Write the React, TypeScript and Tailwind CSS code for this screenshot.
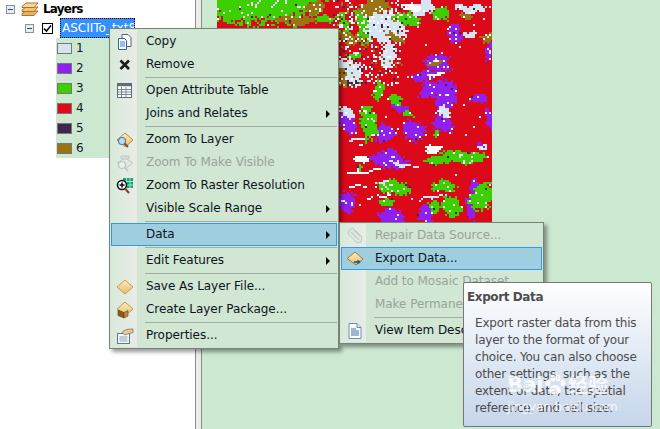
import type { ReactNode } from "react";

// raster colours, same as the legend
const LIGHT = "#d5e5f3";
const PURPLE = "#9020f0";
const GREEN = "#3cd000";
const RED = "#dc0a18";
const DARK = "#40264f";
const BROWN = "#9a7412";
const WHITE = "#ffffff";

const legend = [
  { n: "1", color: "#d5e5f0" },
  { n: "2", color: PURPLE },
  { n: "3", color: GREEN },
  { n: "4", color: "#e00a18" },
  { n: "5", color: DARK },
  { n: "6", color: BROWN },
];

// blobs measured on a 3x crop starting at x=215: cx, cy, rx, ry, colour
type Blob = [number, number, number, number, string];
const blobs: Blob[] = [
  // top left green and the arc round it
  [120, -20, 210, 90, GREEN], [250, 55, 70, 12, BROWN], [300, 20, 30, 20, BROWN],
  [330, 60, 30, 12, GREEN], [430, 70, 60, 50, GREEN], [400, 110, 30, 18, BROWN],
  [480, 20, 45, 24, BROWN], [505, 85, 60, 50, LIGHT], [530, 115, 30, 12, BROWN], [410, 60, 14, 45, RED],
  [375, 30, 18, 8, RED], [580, 50, 40, 22, GREEN], [620, 20, 36, 22, LIGHT], [680, 45, 26, 22, GREEN],
  [405, 210, 35, 40, LIGHT], [400, 240, 22, 8, DARK], [420, 160, 24, 8, GREEN], [470, 155, 30, 28, RED],
  [520, 170, 24, 34, LIGHT], [380, 230, 10, 30, BROWN], [590, 15, 30, 10, WHITE],
  [770, 20, 50, 12, LIGHT], [760, 40, 20, 10, BROWN], [810, 110, 24, 14, BROWN], [760, 95, 20, 10, LIGHT],
  // purple patches
  [712, 100, 20, 30, PURPLE], [820, 155, 10, 28, PURPLE], [670, 190, 38, 28, PURPLE], [665, 188, 22, 10, BROWN],
  [640, 265, 35, 24, PURPLE], [690, 290, 32, 50, PURPLE], [680, 370, 30, 30, PURPLE], [790, 290, 30, 12, PURPLE],
  [822, 360, 10, 40, PURPLE], [625, 222, 40, 14, PURPLE], [560, 320, 28, 11, PURPLE], [590, 385, 36, 30, PURPLE],
  [500, 400, 30, 28, PURPLE], [525, 480, 52, 28, PURPLE], [395, 365, 24, 30, PURPLE], [395, 600, 26, 30, PURPLE],
  [530, 650, 36, 25, PURPLE], [630, 640, 22, 26, PURPLE], [770, 590, 14, 60, PURPLE], [795, 432, 14, 10, PURPLE],
  // white and pale patches
  [690, 340, 16, 20, LIGHT], [660, 225, 30, 5, WHITE], [400, 330, 20, 16, LIGHT], [420, 410, 30, 4, LIGHT],
  [650, 445, 26, 14, WHITE], [800, 440, 16, 6, LIGHT], [510, 550, 40, 7, LIGHT], [420, 550, 30, 3, WHITE],
  [440, 470, 22, 10, WHITE], [560, 490, 50, 5, LIGHT], [650, 590, 40, 4, LIGHT], [490, 590, 40, 3, WHITE], [440, 510, 60, 3, WHITE],
  // green patches
  [458, 365, 24, 52, GREEN], [485, 272, 15, 30, GREEN], [540, 300, 22, 18, GREEN], [580, 335, 18, 8, GREEN],
  [750, 465, 72, 18, GREEN], [670, 482, 38, 12, GREEN], [530, 562, 50, 20, GREEN], [680, 560, 42, 16, GREEN],
  [800, 585, 34, 42, GREEN], [712, 620, 30, 30, GREEN], [520, 610, 26, 12, GREEN], [432, 497, 10, 10, GREEN],
  [655, 400, 8, 10, GREEN], [660, 620, 16, 22, GREEN],
];

function rasterPaths() {
  let seed = 41;
  const rnd = () => {
    seed = (seed * 16807) % 2147483647;
    return seed / 2147483647;
  };
  const cell = 2;
  const paths: Record<string, string> = {};
  for (let y = 0; y < 290; y += cell) {
    let runColor = "";
    let runX = 0;
    for (let x = 0; x <= 276; x += cell) {
      // back to crop coordinates, warped a little so that the patches don't come out as ovals
      const zx = (x + 2) * 3 + 6 * Math.sin(y * 0.13) + 3 * Math.sin(y * 0.41 + 1);
      const zy = y * 3 + 6 * Math.sin(x * 0.11 + 2) + 3 * Math.sin(x * 0.37);
      let c = RED;
      for (const [cx, cy, rx, ry, color] of blobs) {
        const d = ((zx - cx) / rx) ** 2 + ((zy - cy) / ry) ** 2;
        if (d + (rnd() - 0.5) * 0.9 < 1) c = color;
      }
      // speckle: heavier in the mixed patch at the top
      const r = rnd();
      const busy = y < 85 && x > 115 && x < 185;
      if (busy) {
        if (r < 0.16) c = rnd() < 0.6 ? WHITE : LIGHT;
        else if (r < 0.2) c = DARK;
        else if (r < 0.24) c = BROWN;
      } else if (c !== RED) {
        if (r < 0.08) c = rnd() < 0.6 ? WHITE : LIGHT;
        else if (r < 0.09) c = DARK;
      } else if (r < 0.005) c = rnd() < 0.6 ? WHITE : LIGHT;
      if (x === 276 || c !== runColor) {
        if (runColor) paths[runColor] = (paths[runColor] ?? "") + `M${runX} ${y}h${x - runX}v${cell}h${runX - x}z`;
        runColor = c;
        runX = x;
      }
    }
  }
  return paths;
}
const raster = rasterPaths();

function Icon({ children }: { children: ReactNode }) {
  return (
    <svg width="20" height="20" viewBox="0 0 20 20" className="shrink-0">
      {children}
    </svg>
  );
}

const diamond = "M10 3L18 10L12 15.5L10 16.5L2 10Z";
const Defs = () => (
  <svg width="0" height="0" className="absolute">
    <defs>
      <linearGradient id="gold" x1="0" y1="0" x2="0" y2="1">
        <stop offset="0" stopColor="#fdeec2" />
        <stop offset="1" stopColor="#edb85f" />
      </linearGradient>
    </defs>
  </svg>
);

const icons: Record<string, ReactNode> = {
  copy: (
    <Icon>
      <path d="M7 2.5h6l3 3v9h-9z" fill="#fff" stroke="#55616e" />
      <path d="M3.5 6.5h6l2 2v9h-8z" fill="#fff" stroke="#33639c" />
      <path d="M5 10h5M5 12h5M5 14h5" stroke="#2a7fd0" />
    </Icon>
  ),
  remove: (
    <Icon>
      <path d="M5.5 5.5L14 14M14 5.5L5.5 14" stroke="#1c1c1c" strokeWidth="2.6" />
    </Icon>
  ),
  table: (
    <Icon>
      <rect x="2.5" y="2.5" width="14" height="14" fill="#fff" stroke="#5f6b78" />
      <path d="M2.5 4h14" stroke="#5f6b78" strokeWidth="2.5" />
      <path d="M3 8.5h13M3 11h13M3 13.5h13M6.5 6v10M11 6v10" stroke="#7b8794" />
    </Icon>
  ),
  zoomLayer: (
    <Icon>
      <path d={diamond} fill="url(#gold)" stroke="#b98a3c" />
      <circle cx="7" cy="11" r="3.5" fill="#bcdcf5" stroke="#5d7f9f" strokeWidth="1.2" />
      <path d="M9.5 13.5L13 17" stroke="#8b4a2a" strokeWidth="2" />
    </Icon>
  ),
  zoomVisible: (
    <Icon>
      <path d="M10 5L18 10L11 15L2 10Z" fill="#dfe8e0" stroke="#c2cbc4" />
      <path d="M6 3h8v3H6z" fill="#d5ddd6" stroke="#c2cbc4" />
      <circle cx="7" cy="12" r="3.5" fill="#e8eee8" stroke="#bcc5be" strokeWidth="1.2" />
      <path d="M9.5 14.5L13 18" stroke="#c2cbc4" strokeWidth="2" />
    </Icon>
  ),
  zoomRaster: (
    <Icon>
      <rect x="8" y="2" width="10" height="10" fill="#1f9d7a" />
      <path d="M11.5 2v10M15 2v10M8 5.5h10M8 9h10" stroke="#8ff0c8" />
      <circle cx="7" cy="9" r="4.5" fill="#fff" stroke="#111" strokeWidth="1.6" />
      <path d="M4.5 9h5M7 6.5v5" stroke="#111" strokeWidth="1.6" />
      <path d="M10 12.5L14 17" stroke="#8b3a2a" strokeWidth="2" />
    </Icon>
  ),
  saveLayer: (
    <Icon>
      <path d="M10 3L18 10L10 17L2 10Z" fill="url(#gold)" stroke="#c49a4e" />
    </Icon>
  ),
  createPackage: (
    <Icon>
      <path d="M10 2L18 9L10 16L2 9Z" fill="url(#gold)" stroke="#c49a4e" />
      <path d="M3 10l6 2.5v5.5l-6-2.5z" fill="#8a5a20" stroke="#5e3c12" strokeWidth="0.6" />
      <path d="M9 12.5l4-2v5.5l-4 2z" fill="#c08a3c" stroke="#5e3c12" strokeWidth="0.6" />
    </Icon>
  ),
  properties: (
    <Icon>
      <rect x="2.5" y="7.5" width="12" height="10" fill="#f4f8fb" stroke="#5f7a95" />
      <path d="M4.5 11h8M4.5 13h8M4.5 15h8" stroke="#8aa3bb" />
      <path d="M7 6.5C9 3.5 13 3 18 3v3.5c-3 .5-6 2-8.5 2.5z" fill="#e8c79a" stroke="#8a7250" strokeWidth="0.8" />
    </Icon>
  ),
  repair: (
    <Icon>
      <path d="M4 4l4-2 9 9-1 5-4 1-9-9z" fill="#dfe6e0" stroke="#bfc8c2" />
      <path d="M6 6l8 8M9 4l6 6" stroke="#c5cec8" strokeWidth="1.4" />
    </Icon>
  ),
  exportData: (
    <Icon>
      <path d="M10 3L18 10L11 16L2 9.5Z" fill="url(#gold)" stroke="#9a7a3c" />
      <path d="M9 13h6" stroke="#1c5f8f" strokeWidth="1.8" />
      <path d="M12.5 10.5L16 13L12.5 15.5Z" fill="#1c5f8f" />
    </Icon>
  ),
  doc: (
    <Icon>
      <path d="M4 2.5h8l4 4v11H4z" fill="#fff" stroke="#6f8fb0" />
      <path d="M12 2.5v4h4" fill="#dbe6f0" stroke="#6f8fb0" />
      <path d="M6 8h5M6 10h8M6 12h8M6 14h8" stroke="#3a6fa5" />
    </Icon>
  ),
};

type Row = {
  label: string;
  icon?: string;
  muted?: boolean;
  arrow?: boolean;
  active?: boolean;
  sep?: boolean;
};

const menu: Row[] = [
  { label: "Copy", icon: "copy" },
  { label: "Remove", icon: "remove", sep: true },
  { label: "Open Attribute Table", icon: "table" },
  { label: "Joins and Relates", arrow: true, sep: true },
  { label: "Zoom To Layer", icon: "zoomLayer" },
  { label: "Zoom To Make Visible", icon: "zoomVisible", muted: true },
  { label: "Zoom To Raster Resolution", icon: "zoomRaster" },
  { label: "Visible Scale Range", arrow: true, sep: true },
  { label: "Data", arrow: true, active: true, sep: true },
  { label: "Edit Features", arrow: true, sep: true },
  { label: "Save As Layer File...", icon: "saveLayer" },
  { label: "Create Layer Package...", icon: "createPackage", sep: true },
  { label: "Properties...", icon: "properties" },
];

const dataMenu: Row[] = [
  { label: "Repair Data Source...", icon: "repair", muted: true },
  { label: "Export Data...", icon: "exportData", active: true },
  { label: "Add to Mosaic Dataset", muted: true },
  { label: "Make Permanent", muted: true, sep: true },
  { label: "View Item Description...", icon: "doc" },
];

function MenuList({ rows, gutter }: { rows: Row[]; gutter: string }) {
  return (
    <div className="relative">
      <div className={`absolute inset-y-0 left-0 bg-gradient-to-r from-[#d8eada] to-[#e9ece8] ${gutter}`} />
      {rows.map((row) => (
        <div key={row.label} className="relative">
          <div
            className={`flex h-[23px] items-center border ${
              row.active ? "border-[#3399ee] bg-[#9fcfdf]" : "border-transparent"
            }`}
          >
            <div className={`flex shrink-0 justify-center ${gutter}`}>{row.icon ? icons[row.icon] : null}</div>
            <span
              className={`ml-[8px] flex-1 whitespace-nowrap pb-[2px] tracking-[-0.05px] ${
                row.muted ? "text-[#9aa39b]" : "text-[#0c1420]"
              }`}
            >
              {row.label}
            </span>
            {row.arrow ? <span className="mr-[6px] h-0 w-0 border-y-[4px] border-l-[4px] border-y-transparent border-l-black" /> : null}
          </div>
          {row.sep ? (
            <div className="flex h-[3px] items-center">
              <div className={`shrink-0 ${gutter}`} />
              <div className="ml-[8px] h-px flex-1 bg-[#a4aea6]" />
            </div>
          ) : null}
        </div>
      ))}
    </div>
  );
}

function LayersIcon() {
  return (
    <svg width="18" height="16" viewBox="0 0 18 16">
      <path d="M1 12.5L5 10H17L13 14.5H1Z" fill="#e9b25e" stroke="#a9742c" />
      <path d="M1 9L5 6H17L13 10.5H1Z" fill="#f0c478" stroke="#a9742c" />
      <path d="M1 5.5L5 2H17L13 6.5H1Z" fill="#f6d89a" stroke="#a9742c" />
    </svg>
  );
}

function TreeToggle() {
  return (
    <span className="flex h-[9px] w-[9px] items-center justify-center border border-[#8a929c] bg-[#e8edf2]">
      <span className="h-px w-[5px] bg-[#2a4a80]" />
    </span>
  );
}

export default function App() {
  return (
    <div
      className="relative flex h-[429px] w-[660px] overflow-hidden bg-[#cde8d0] text-[12px] leading-none"
      style={{ fontFamily: '"DejaVu Sans", sans-serif' }}
    >
      <Defs />

      {/* table of contents */}
      <div className="w-[195px] shrink-0 bg-white">
        <div className="flex h-[18px] items-center pl-[6px]">
          <TreeToggle />
          <span className="ml-[6px]">
            <LayersIcon />
          </span>
          <span className="ml-[4px] font-bold tracking-[-0.8px] text-black">Layers</span>
        </div>
        <div className="flex h-[20px] items-center pl-[25px]">
          <TreeToggle />
          <span className="ml-[8px] flex h-[11px] w-[11px] items-center justify-center border border-black bg-white">
            <svg width="9" height="9" viewBox="0 0 9 9">
              <path d="M1 4.5L3.5 7L8 1.5" fill="none" stroke="#000" strokeWidth="1.6" />
            </svg>
          </span>
          <span className="ml-[7px] flex h-[20px] w-[75px] items-center overflow-hidden whitespace-nowrap border border-dotted border-black bg-[#3390ff] pl-px text-white">
            ASCIITo_txt8
          </span>
        </div>
        <div className="ml-[56px] w-[60px] bg-[#cde8d0]">
          {legend.map((item) => (
            <div key={item.n} className="flex h-[20px] items-center pl-px">
              <span className="h-[11px] w-[15px] border border-[#777]" style={{ backgroundColor: item.color }} />
              <span className="ml-[4px] text-[#14181c]">{item.n}</span>
            </div>
          ))}
        </div>
      </div>

      <div className="w-[7px] shrink-0 border-x border-x-[#8b8b8b] bg-[#ecece8]" />

      {/* map view */}
      <div className="flex-1 pl-[15px]">
        <svg width="275" height="290" viewBox="0 0 275 290" shapeRendering="crispEdges" className="block">
          <rect width="275" height="290" fill={RED} />
          {Object.entries(raster).map(([color, d]) => (
            <path key={color} d={d} fill={color} />
          ))}
        </svg>
      </div>

      {/* context menu */}
      <div className="absolute left-[109px] top-[28px] w-[230px] border border-[#76857a] bg-[#d1e6d3] px-px py-px shadow-[3px_3px_4px_rgba(0,0,0,0.4)]">
        <MenuList rows={menu} gutter="w-[26px]" />
      </div>

      {/* data submenu */}
      <div className="absolute left-[339px] top-[222px] w-[205px] border border-[#76857a] bg-[#d1e6d3] px-px py-px shadow-[3px_3px_4px_rgba(0,0,0,0.4)]">
        <MenuList rows={dataMenu} gutter="w-[25px]" />
      </div>

      {/* tooltip */}
      <div className="absolute left-[463px] top-[282px] h-[145px] w-[189px] rounded-[2px] border border-[#767676] bg-gradient-to-b from-white to-[#c5d5ea] text-[#4c4c4c]">
        <div className="pl-[3px] pt-[8px] font-bold tracking-[-0.4px] text-[#4c4c4c]">Export Data</div>
        <div className="pl-[11px] pt-[12px] leading-[17px] tracking-[-0.2px]">
          <div className="whitespace-nowrap">Export raster data from this</div>
          <div className="whitespace-nowrap">layer to the format of your</div>
          <div className="whitespace-nowrap">choice. You can also choose</div>
          <div className="whitespace-nowrap">other settings, such as the</div>
          <div className="whitespace-nowrap">extent of data, the spatial</div>
          <div className="whitespace-nowrap">reference, and cell size.</div>
        </div>
        {/* image host's watermark */}
        <div className="absolute left-[43px] top-[90px] flex items-center text-white/80">
          <span className="text-[21px] font-bold tracking-[-0.5px]">Bai</span>
          <svg width="24" height="24" viewBox="0 0 24 24" className="opacity-80">
            <ellipse cx="12" cy="17" rx="6" ry="5" fill="#fff" />
            <ellipse cx="5" cy="10" rx="2.5" ry="3.5" fill="#fff" />
            <ellipse cx="10" cy="5" rx="2.5" ry="3.5" fill="#fff" />
            <ellipse cx="15" cy="5" rx="2.5" ry="3.5" fill="#fff" />
            <ellipse cx="20" cy="10" rx="2.5" ry="3.5" fill="#fff" />
          </svg>
          <span className="ml-px text-[20px] font-bold" style={{ fontFamily: '"Noto Sans CJK SC", sans-serif' }}>
            经验
          </span>
        </div>
        <div className="absolute left-[43px] top-[118px] text-[12px] text-white/80">jingyan.baidu.com</div>
      </div>
    </div>
  );
}
